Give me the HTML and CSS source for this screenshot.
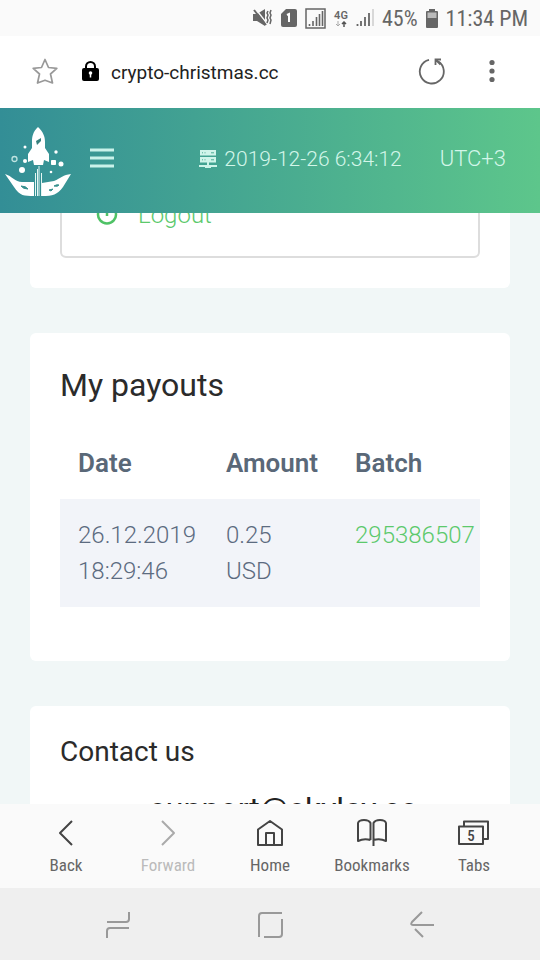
FILE: index.html
```html
<!DOCTYPE html>
<html lang="en">
<head>
<meta charset="utf-8">
<meta name="viewport" content="width=device-width, initial-scale=1">
<title>My payouts</title>
<link rel="stylesheet" href="styles.css">
</head>
<body>
<div class="status">
  <svg width="20" height="20" viewBox="0 0 20 20" aria-label="Muted, vibrate"><path d="M0 6h4l8-5v17l-8-5H0z" fill="#666"/><path d="M2 0l13 17" stroke="#fafafa" stroke-width="1.500"/><path d="M1 2l12 15" stroke="#666" stroke-width="2"/><path d="M15 3l-1 2 1 2-1 3 1 2-1 3M18 2l-1 3 1 2-1 3 1 2-1 4" fill="none" stroke="#666" stroke-width="1.500"/></svg>
  <svg width="16" height="18" viewBox="0 0 16 18" aria-label="SIM 1"><path d="M5 0h9q2 0 2 2v14q0 2-2 2H2q-2 0-2-2V5z" fill="#666"/><path d="M6 6l2-1v8" fill="none" stroke="#fff" stroke-width="2"/></svg>
  <svg width="21" height="21" viewBox="0 0 21 21" aria-label="Signal"><path d="M1 1h19v19H1z" fill="none" stroke="#666" stroke-width="1.500"/><path d="M4.500 18v-2M8 18v-5M11.500 18V9M14.500 18V6M17.500 18V3" stroke="#666" stroke-width="1.600"/></svg>
  <span class="network"><span>4G</span><svg width="12" height="6" viewBox="0 0 12 6"><path d="M3 0v4M1 3l2 2 2-2" stroke="#aaa" fill="none"/><path d="M9 6V2M7 3l2-2 2 2" stroke="#555" stroke-width="1.500" fill="none"/></svg></span>
  <svg width="18" height="18" viewBox="0 0 18 18" aria-label="Signal"><path d="M1.500 17v-2M5 17v-5M9 17V8M13 17V4" stroke="#666" stroke-width="1.800"/><path d="M17 17V0" stroke="#ccc" stroke-width="1.500"/></svg>
  <span>45%</span>
  <svg width="12" height="19" viewBox="0 0 12 19" aria-label="Battery"><path d="M3 0h6v2h2q1 0 1 1v15q0 1-1 1H1q-1 0-1-1V3q0-1 1-1h2z" fill="#666"/><path d="M1.500 3.500h9V9h-9z" fill="#bbb"/></svg>
  <span>11:34 PM</span>
</div>
<div class="address">
  <button class="icon-button" aria-label="Add bookmark"><svg width="26" height="27" viewBox="0 0 26 27"><path d="M13 1.500l3.500 8 8.300.8-6.300 5.700 2 9L13 22.200 5.500 25l2-9L1.200 10.300l8.300-.8z" fill="none" stroke="#999" stroke-width="1.700" stroke-linejoin="round"/></svg></button>
  <svg class="lock" width="17" height="20" viewBox="0 0 17 20" aria-label="Secure"><path d="M4 8V5.500a4.500 4.500 0 0 1 9 0V8" fill="none" stroke="#000" stroke-width="2"/><rect y="7" width="17" height="13" rx="2"/><path d="M8.500 12v4.500" stroke="#fff" stroke-width="1.500"/><circle cx="8.500" cy="12" r="1.800" fill="#fff"/></svg>
  <span class="url">crypto-christmas.cc</span>
  <button class="icon-button reload" aria-label="Reload"><svg width="28" height="28" viewBox="0 0 28 28"><path d="M11 2.800A12 12 0 1 0 20 4.200" fill="none" stroke="#666" stroke-width="1.800"/><path d="M17.500 8V2.500H23M18 3l4.500 4.500" fill="none" stroke="#666" stroke-width="1.800"/></svg></button>
  <button class="icon-button" aria-label="More"><svg width="6" height="24" viewBox="0 0 6 24" fill="#666"><circle cx="3" cy="3.500" r="2.600"/><circle cx="3" cy="12" r="2.600"/><circle cx="3" cy="20.500" r="2.600"/></svg></button>
</div>
<header class="site-header">
  <a class="logo" href="#" aria-label="Start page"><svg width="66" height="70" viewBox="0 0 66 70">
    <g fill="#fff"><path d="M33 1c-5 5-6 9-6 15v6l-4 6v8l5-2 1 5h9l1-5 5 2v-8l-4-6v-6c0-6-2-10-7-15z"/><path d="M0 48c7 2 10 8 17 8h12v14c-10 0-14 0-20-9zM66 48c-8 1-10 4-17 7l-12 2v13c11 0 15-1 21-9z"/><circle cx="17" cy="44" r="3"/><circle cx="56" cy="38" r="2.500"/><circle cx="20" cy="35" r="2"/><circle cx="51" cy="26" r="1.700"/><circle cx="20" cy="21" r="1.500"/><circle cx="46" cy="46" r="1.300"/><path d="M46.500 34.500h4v4h-4z" stroke="#fff"/></g>
    <circle cx="9.500" cy="33" r="2.500" fill="none" stroke="#bfe3e0" stroke-width="1.300"/><path d="M30.500 47v23M32.500 43v27M34 40v30M36.500 47v23" stroke="#e4f6f3"/><path d="M31.500 70V54M35.500 70V54" stroke="#338e93"/>
    <path d="M31 15l5-3v3l-4 4z" fill="#38817f"/><path d="M16 60q5 0 7 3-5 0-7-3zM44 64l4-1-2 2zM49 60q3-2 5-1-1 2-5 1z" fill="#38918f" stroke="#38918f"/></svg></a>
  <button class="menu-toggle" aria-label="Menu"><svg width="24" height="20" viewBox="0 0 24 20"><path d="M0 2h24M0 10h24M0 18h24" stroke="#c9f2ea" stroke-width="3"/></svg></button>
  <div class="clock"><svg width="18" height="18" viewBox="0 0 18 18"><path d="M1 0h16v5.500H1zM1 7h16v5.500H1zM8 12h2v3h8v2h-6v1H6v-1H0v-2h8z" fill="#cff5ea"/><path d="M3 2.800h1M5.500 2.800h1M12 2.800h3M3 9.800h1M5.500 9.800h1M12 9.800h3" stroke="#4cad95"/></svg><span>2019-12-26 6:34:12</span></div>
  <span class="zone">UTC+3</span>
</header>
<main class="page">
  <section class="card card-menu">
    <div class="menu-box"><a href="#" class="logout"><svg width="22" height="22" viewBox="0 0 22 22"><path d="M6 3a9 9 0 1 0 10 0M11 0v12" fill="none" stroke="#4fc266" stroke-width="2.500"/></svg>Logout</a></div>
  </section>
  <section class="card card-payouts">
    <h1>My payouts</h1>
    <table>
      <thead><tr><th class="date">Date</th><th class="amount">Amount</th><th>Batch</th></tr></thead>
      <tbody><tr><td>26.12.2019 18:29:46</td><td>0.25 USD</td><td><a href="#">295386507</a></td></tr></tbody>
    </table>
  </section>
  <section class="card card-contact">
    <h2>Contact us</h2>
    <p>support@skylay.cc</p>
  </section>
</main>
<nav class="toolbar" aria-label="Browser">
  <button><svg width="34" height="28" viewBox="0 0 34 28"><path d="M23 2L11 14l12 12"/></svg>Back</button>
  <button class="off" disabled><svg width="34" height="28" viewBox="0 0 34 28"><path d="M11 2l12 12-12 12"/></svg>Forward</button>
  <button><svg width="34" height="28" viewBox="0 0 34 28"><path d="M5 10.500L17 2l12 8.500V26h-8V14h-8v12H5zM13 26h8"/></svg>Home</button>
  <button><svg width="34" height="28" viewBox="0 0 34 28"><path d="M15.500 21V4Q14 1 9 1T3 4v18q6-3 12.500-1M18.500 27V4Q20 1 25 1t6 3v18q-6-3-12.500-1"/></svg>Bookmarks</button>
  <button><svg width="34" height="28" viewBox="0 0 34 28"><path d="M7 7V2.500h24V20h-5M2 7.500h24V25H2z"/><text x="14" y="21.500">5</text></svg>Tabs</button>
</nav>
<nav class="system" aria-label="System">
  <button aria-label="Recent apps"><svg width="26" height="28" viewBox="0 0 26 28"><path d="M2 11h19q3 0 3-3V1M24 17H5q-3 0-3 3v7"/></svg></button>
  <button aria-label="Home screen"><svg width="26" height="28" viewBox="0 0 26 28"><path d="M2 26V5q0-3 3-3h20M25 8v15q0 3-3 3H7"/></svg></button>
  <button aria-label="Back"><svg width="26" height="28" viewBox="0 0 26 28"><path d="M13 1L3 11q-2 3 1 3h21M6 18l8 8"/></svg></button>
</nav>
</body>
</html>
```
FILE: styles.css
```css
* { box-sizing: border-box; }
body {
  margin: 0;
  height: 100vh;
  display: flex;
  flex-direction: column;
  overflow: hidden;
  background: #f1f7f7;
  font-family: Roboto, "Liberation Sans", sans-serif;
}
button { border: 0; padding: 0; background: none; font: inherit; color: inherit; }
svg { display: block; flex: none; }
a { color: #5cc96c; text-decoration: none; }

.status {
  flex: none;
  height: 36px;
  padding: 0 12px;
  display: flex;
  align-items: center;
  justify-content: flex-end;
  gap: 8px;
  background: #fafafa;
  color: #666;
  font-family: "Roboto Condensed", Roboto, sans-serif;
  font-size: 22px;
}
.network { display: flex; flex-direction: column; align-items: center; font-family: Roboto, sans-serif; font-size: 11px; line-height: 11px; font-weight: 600; }

.address {
  flex: none;
  height: 72px;
  padding: 0 45px 2px 32px;
  display: flex;
  align-items: center;
  background: #fff;
  color: #222;
}
.lock { margin: 0 12px 0 24px; }
.url { flex: 1; padding-top: 2px; font-size: 19px; }
.reload { margin-right: 43px; }

.site-header {
  flex: none;
  position: relative;
  z-index: 1;
  height: 105px;
  padding: 0 34px 0 5px;
  display: flex;
  align-items: center;
  background: linear-gradient(90deg, #338e96, #5dc68b);
  color: #d3f6e9;
  font-size: 22px;
  font-weight: 300;
}
.menu-toggle { margin: 0 auto 6px 19px; }
.clock, .zone { margin-bottom: 4px; }
.clock { display: flex; align-items: center; gap: 7px; margin-right: 38px; font-size: 21px; }

.page { flex: 1; min-height: 0; overflow: hidden; padding: 0 30px; }
.card { padding: 30px; margin-bottom: 45px; border-radius: 6px; background: #fff; }
.card-menu { margin-top: -109px; }
.menu-box { padding: 64px 34px 26px; border: 2px solid #ddd; border-radius: 6px; }
.logout { display: flex; align-items: center; gap: 20px; font-size: 24px; line-height: 30px; font-weight: 300; }
.card-payouts { padding-bottom: 54px; }
h1 { margin: 0; color: #2b2b2b; font-size: 32px; line-height: 44px; font-weight: 400; }
h2 { margin: 0; color: #2b2b2b; font-size: 28px; line-height: 32px; font-weight: 400; }
.card-contact p { margin: 17px 0 0; padding-left: 26px; font-size: 32px; line-height: 48px; text-align: center; color: #222; }

table { width: 100%; margin-top: 20px; table-layout: fixed; border-collapse: collapse; color: #5c6b80; font-size: 24px; line-height: 36px; }
th, td { padding: 18px; text-align: left; vertical-align: top; font-weight: 300; }
th { padding-right: 0; font-size: 26px; font-weight: 600; color: #5a6878; }
td:first-child { padding-right: 0; }
th:last-child, td:last-child { padding-left: 0; padding-right: 0; }
.date { width: 148px; }
.amount { width: 147px; }
td:nth-child(2) { padding-right: 36px; }
tbody { background: #f2f4f9; }

.toolbar {
  flex: none;
  height: 84px;
  padding: 2px 15px 0;
  display: grid;
  grid-template-columns: repeat(5, 1fr);
  background: #fafafa;
  color: #666;
  font-family: "Roboto Condensed", Roboto, sans-serif;
  font-size: 17px;
  line-height: 20px;
}
.toolbar button { display: flex; flex-direction: column; align-items: center; justify-content: center; gap: 8px; }
.toolbar svg { fill: none; stroke: #444; stroke-width: 2; stroke-linejoin: round; }
.toolbar text { fill: #444; stroke: none; font-size: 15px; font-weight: 500; text-anchor: middle; }
.toolbar .off { color: #bbb; }
.toolbar .off svg { stroke: #aaa; }

.system {
  flex: none;
  height: 72px;
  padding: 2px 42px 0;
  display: grid;
  grid-template-columns: repeat(3, 1fr);
  background: #efefef;
}
.system button { display: flex; align-items: center; justify-content: center; }
.system svg { fill: none; stroke: #999; stroke-width: 2; }
```
